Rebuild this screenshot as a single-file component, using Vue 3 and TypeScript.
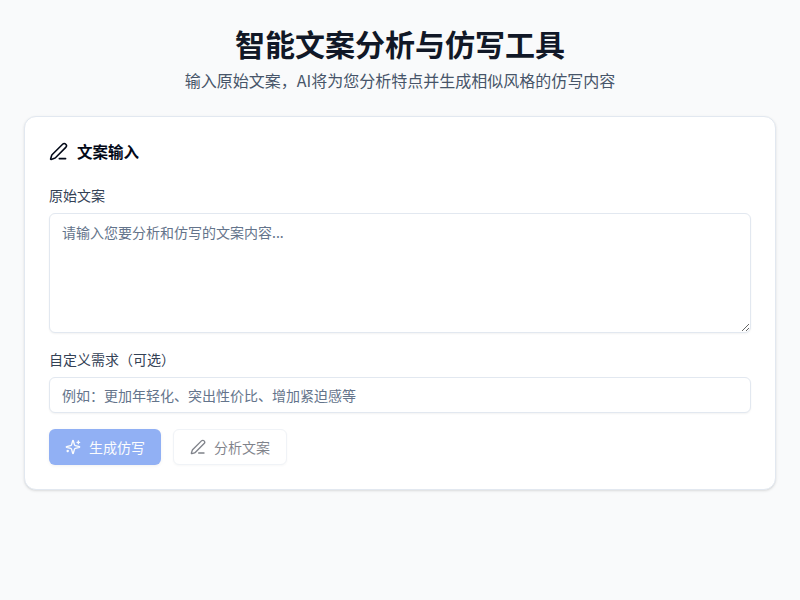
<script setup lang="ts">
const pen = ['M13 21h8', 'M21.174 6.812a1 1 0 0 0-3.986-3.987L3.842 16.174a2 2 0 0 0-.5.83l-1.321 4.352a.5.5 0 0 0 .623.622l4.353-1.32a2 2 0 0 0 .83-.497z']
const sparkles = ['M9.937 15.5A2 2 0 0 0 8.5 14.063l-6.135-1.582a.5.5 0 0 1 0-.962L8.5 9.936A2 2 0 0 0 9.937 8.5l1.582-6.135a.5.5 0 0 1 .963 0L14.063 8.5A2 2 0 0 0 15.5 9.937l6.135 1.581a.5.5 0 0 1 0 .964L15.5 14.063a2 2 0 0 0-1.437 1.437l-1.582 6.135a.5.5 0 0 1-.963 0z', 'M20 3v4', 'M22 5h-4', 'M4 17v2', 'M5 18H3']
</script>

<template>
  <div class="page">
    <header class="head">
      <h1>智能文案分析与仿写工具</h1>
      <p>输入原始文案，AI将为您分析特点并生成相似风格的仿写内容</p>
    </header>
    <section class="card">
      <h2>
        <svg class="ic19" viewBox="0 0 24 24"><path v-for="d in pen" :key="d" :d="d" /></svg>
        文案输入
      </h2>
      <label class="field">
        <span>原始文案</span>
        <textarea placeholder="请输入您要分析和仿写的文案内容..."></textarea>
      </label>
      <label class="field">
        <span>自定义需求（可选）</span>
        <input type="text" placeholder="例如：更加年轻化、突出性价比、增加紧迫感等" />
      </label>
      <div class="actions">
        <button class="btn primary" disabled>
          <svg class="ic16" viewBox="0 0 24 24"><path v-for="d in sparkles" :key="d" :d="d" /></svg>
          生成仿写
        </button>
        <button class="btn ghost" disabled>
          <svg class="ic16" viewBox="0 0 24 24"><path v-for="d in pen" :key="d" :d="d" /></svg>
          分析文案
        </button>
      </div>
    </section>
  </div>
</template>

<style>
html, body { margin: 0; background: #f9fafb; }
</style>

<style scoped>
* { box-sizing: border-box; }
.page {
  min-height: 600px;
  padding: 22px 24px 24px;
  background: #f9fafb;
  font-family: "Noto Sans CJK SC", sans-serif;
}
.head { text-align: center; margin-bottom: 24px; }
h1 { margin: 0 0 4px; font-size: 30px; line-height: 42px; font-weight: 700; color: #111827; }
.head p { margin: 0; font-size: 16px; line-height: 24px; color: #475569; }
.card {
  background: #fff;
  border: 1px solid #e2e8f0;
  border-radius: 12px;
  padding: 24px;
  box-shadow: 0 1px 3px rgba(0,0,0,.1), 0 1px 2px -1px rgba(0,0,0,.1);
}
h2 {
  margin: 0 0 24px;
  display: flex;
  align-items: center;
  gap: 9px;
  font-size: 15.5px;
  line-height: 20px;
  font-weight: 700;
  color: #020817;
}
svg { fill: none; stroke: currentColor; stroke-width: 2; stroke-linecap: round; stroke-linejoin: round; flex: none; }
.ic19 { width: 19px; height: 19px; }
.ic16 { width: 16px; height: 16px; }
.field { display: block; margin-bottom: 16px; }
.field span { display: block; margin-bottom: 8px; font-size: 14px; line-height: 20px; font-weight: 400; color: #334155; }
textarea, input {
  display: block;
  width: 100%;
  font: inherit;
  font-size: 14px;
  line-height: 20px;
  color: #020817;
  background: #fff;
  border: 1px solid #e2e8f0;
  border-radius: 6px;
  box-shadow: 0 1px 2px rgba(0,0,0,.05);
  outline: none;
}
textarea { height: 120px; padding: 8px 12px; }
input { height: 36px; padding: 4px 12px; }
textarea::placeholder, input::placeholder { color: #64748b; opacity: 1; }
.actions { display: flex; gap: 12px; }
.btn {
  display: inline-flex;
  align-items: center;
  justify-content: center;
  gap: 8px;
  height: 36px;
  padding: 0 16px;
  font: inherit;
  font-size: 14px;
  font-weight: 400;
  border-radius: 6px;
  opacity: .5;
}
.primary { background: #2563eb; color: #f8fafc; border: 0; box-shadow: 0 1px 3px rgba(0,0,0,.1); }
.ghost { background: #fff; color: #020817; border: 1px solid #e2e8f0; box-shadow: 0 1px 2px rgba(0,0,0,.05); }
</style>
